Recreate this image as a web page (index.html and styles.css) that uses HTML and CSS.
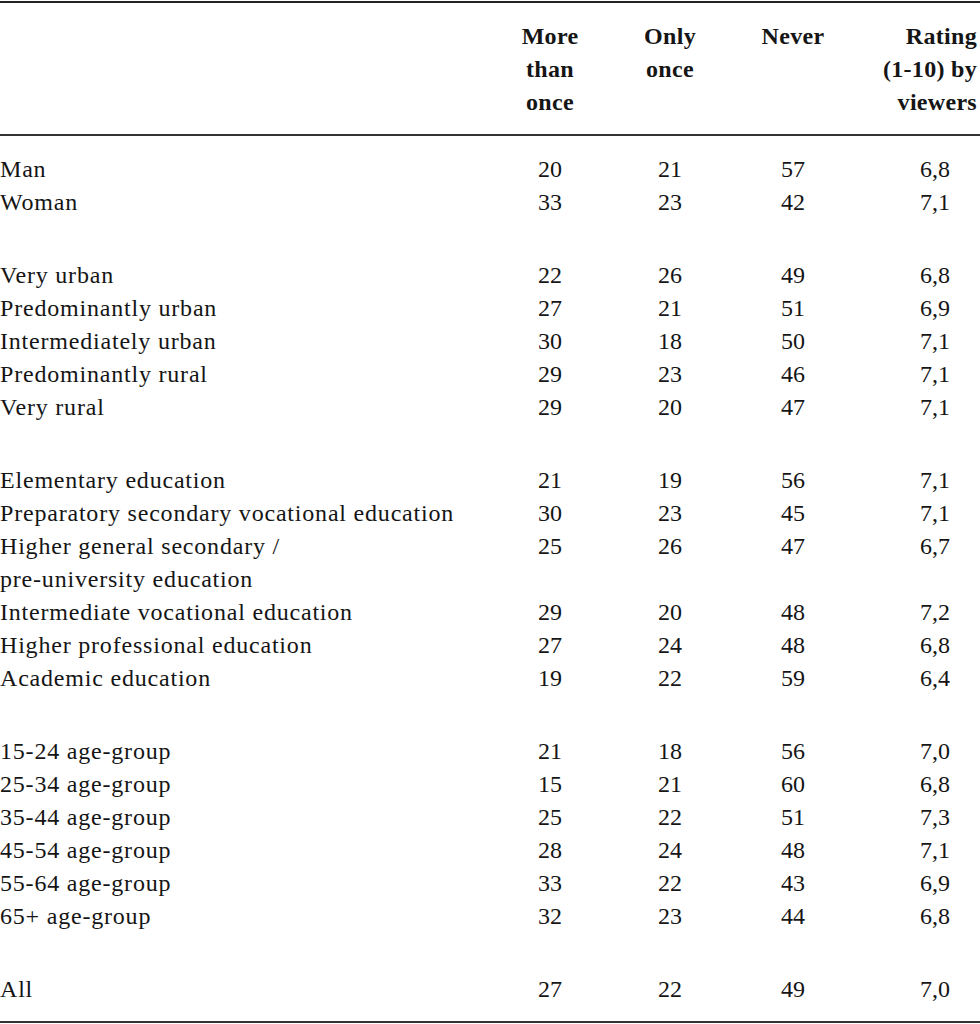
FILE: index.html
```html
<!DOCTYPE html>
<html lang="en">
<head>
  <meta charset="UTF-8">
  <title>Viewers table</title>
  <link rel="stylesheet" href="styles.css">
</head>
<body>
  <table class="stats">
    <colgroup>
      <col class="c-label">
      <col class="c-num">
      <col class="c-num">
      <col class="c-never">
      <col class="c-rating">
    </colgroup>
    <thead>
      <tr>
        <th></th>
        <th>More<br>than<br>once</th>
        <th>Only<br>once</th>
        <th>Never</th>
        <th class="rating">Rating<br>(1-10) by<br>viewers</th>
      </tr>
    </thead>
    <tbody>
      <tr class="first"><td>Man</td><td>20</td><td>21</td><td>57</td><td class="rating">6,8</td></tr>
      <tr><td>Woman</td><td>33</td><td>23</td><td>42</td><td class="rating">7,1</td></tr>
      <tr class="gap"><td colspan="5"></td></tr>
      <tr><td>Very urban</td><td>22</td><td>26</td><td>49</td><td class="rating">6,8</td></tr>
      <tr><td>Predominantly urban</td><td>27</td><td>21</td><td>51</td><td class="rating">6,9</td></tr>
      <tr><td>Intermediately urban</td><td>30</td><td>18</td><td>50</td><td class="rating">7,1</td></tr>
      <tr><td>Predominantly rural</td><td>29</td><td>23</td><td>46</td><td class="rating">7,1</td></tr>
      <tr><td>Very rural</td><td>29</td><td>20</td><td>47</td><td class="rating">7,1</td></tr>
      <tr class="gap"><td colspan="5"></td></tr>
      <tr><td>Elementary education</td><td>21</td><td>19</td><td>56</td><td class="rating">7,1</td></tr>
      <tr><td>Preparatory secondary vocational education</td><td>30</td><td>23</td><td>45</td><td class="rating">7,1</td></tr>
      <tr><td>Higher general secondary /<br>pre-university education</td><td>25</td><td>26</td><td>47</td><td class="rating">6,7</td></tr>
      <tr><td>Intermediate vocational education</td><td>29</td><td>20</td><td>48</td><td class="rating">7,2</td></tr>
      <tr><td>Higher professional education</td><td>27</td><td>24</td><td>48</td><td class="rating">6,8</td></tr>
      <tr><td>Academic education</td><td>19</td><td>22</td><td>59</td><td class="rating">6,4</td></tr>
      <tr class="gap"><td colspan="5"></td></tr>
      <tr><td>15-24 age-group</td><td>21</td><td>18</td><td>56</td><td class="rating">7,0</td></tr>
      <tr><td>25-34 age-group</td><td>15</td><td>21</td><td>60</td><td class="rating">6,8</td></tr>
      <tr><td>35-44 age-group</td><td>25</td><td>22</td><td>51</td><td class="rating">7,3</td></tr>
      <tr><td>45-54 age-group</td><td>28</td><td>24</td><td>48</td><td class="rating">7,1</td></tr>
      <tr><td>55-64 age-group</td><td>33</td><td>22</td><td>43</td><td class="rating">6,9</td></tr>
      <tr><td>65+ age-group</td><td>32</td><td>23</td><td>44</td><td class="rating">6,8</td></tr>
      <tr class="gap"><td colspan="5"></td></tr>
      <tr class="last"><td>All</td><td>27</td><td>22</td><td>49</td><td class="rating">7,0</td></tr>
    </tbody>
  </table>
</body>
</html>
```

FILE: styles.css
```css
* {
  padding: 0;
  margin: 0;
}
body {
  background: #fff;
  color: #151515;
  font-family: "Liberation Serif", "Times New Roman", serif;
  font-size: 24px;
}
.stats {
  width: 980px;
  table-layout: fixed;
  border-collapse: collapse;
  border-top: 2px solid #222;
  border-bottom: 2px solid #333;
  margin-top: 1px;
}
.c-label {
  width: 490px;
}
.c-num {
  width: 120px;
}
.c-never {
  width: 126px;
}
.c-rating {
  width: 124px;
}
th,
td {
  line-height: 33px;
  vertical-align: top;
  text-align: center;
  font-weight: normal;
  white-space: nowrap;
}
thead th {
  font-weight: bold;
  letter-spacing: 0.3px;
  padding: 17px 0 15px;
  border-bottom: 2px solid #333;
}
thead th.rating {
  text-align: right;
  padding-right: 3px;
}
tbody td:first-child {
  text-align: left;
  letter-spacing: 0.8px;
}
tbody td.rating {
  text-align: right;
  padding-right: 30px;
}
tbody tr.first td {
  padding-top: 17px;
}
tbody tr.last td {
  padding-bottom: 15px;
}
tr.gap td {
  height: 40px;
  padding: 0;
}
```
